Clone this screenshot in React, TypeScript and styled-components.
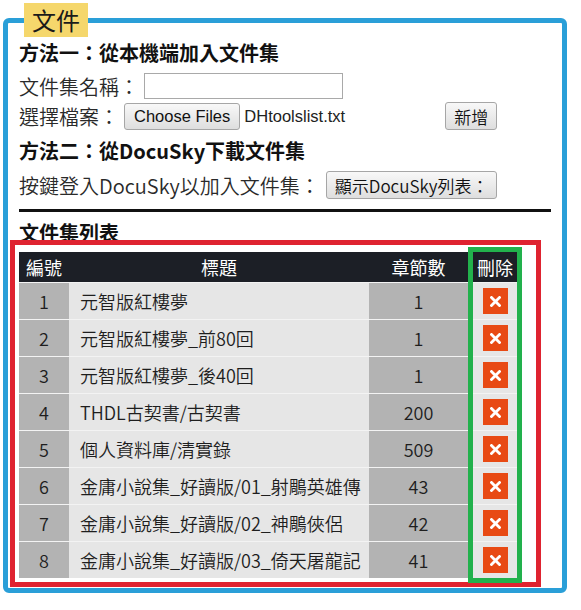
import React from 'react';
import styled, { createGlobalStyle } from 'styled-components';

const GlobalStyle = createGlobalStyle`
  html, body { margin: 0; padding: 0; background: #fff; }
  body { font-family: "Noto Sans CJK TC", "Noto Sans", sans-serif; color: #222; }
`;

const Panel = styled.fieldset`
  box-sizing: border-box;
  width: 564px;
  min-width: 0;
  margin: 3px 0 0 3px;
  padding: 0 11px 10px 11px;
  border: 5px solid #2a9fd8;
  border-radius: 6px;
`;

const Legend = styled.legend`
  margin-left: 5px;
  padding: 0 8px;
  height: 34px;
  line-height: 34px;
  background: #f5d76c;
  font-size: 24px;
  font-weight: 400;
  color: #1a1a1a;
`;

const Heading = styled.h2<{ $mt: number }>`
  margin: ${(p) => p.$mt}px 0 0;
  font-size: 20px;
  line-height: 26px;
  height: 26px;
  font-weight: 700;
  color: #111;
`;

const FieldRow = styled.div<{ $mt: number; $h: number }>`
  display: flex;
  align-items: center;
  margin-top: ${(p) => p.$mt}px;
  height: ${(p) => p.$h}px;
  font-size: 20px;
  font-weight: 350;
  color: #2a2a2a;
  white-space: nowrap;
`;

const TextInput = styled.input`
  box-sizing: border-box;
  width: 199px;
  height: 26px;
  margin: 0 0 0 5px;
  padding: 0 4px;
  border: 1px solid #a9a9a9;
  background: #fff;
`;

const NativeButton = styled.button<{ $ml: number }>`
  box-sizing: border-box;
  height: 28px;
  margin: 0 0 0 ${(p) => p.$ml}px;
  padding: 0 8px;
  border: 1px solid #a6a6a6;
  border-radius: 3px;
  background: linear-gradient(#f8f8f8, #dedede);
  color: #111;
  font-family: "Noto Sans CJK TC", sans-serif;
  font-size: 17px;
  font-weight: 350;
  line-height: 1;
  white-space: nowrap;
`;

const ChooseButton = styled(NativeButton)`
  height: 27px;
  padding: 0 9px;
  font-family: "Liberation Sans", Arial, sans-serif;
  font-size: 16.5px;
  font-weight: 400;
`;

const FileName = styled.span`
  margin-left: 4px;
  font-family: "Liberation Sans", Arial, sans-serif;
  font-size: 16.5px;
  font-weight: 400;
  color: #222;
`;

const Rule = styled.hr`
  height: 3px;
  margin: 9px 0 0;
  border: none;
  background: #111;
`;

const TableArea = styled.div`
  position: relative;
  width: 503px;
  margin-top: 6px;
`;

const GridRow = styled.div`
  display: grid;
  grid-template-columns: 50px 300px 99px 54px;
  box-sizing: border-box;
  height: 37px;
  & + & {
    border-top: 1px solid #f3f3f3;
  }
`;

const HeadRow = styled(GridRow)`
  height: 30px;
  background: #1c1f26;
  color: #fff;
  font-size: 18px;
`;

const HeadCell = styled.div`
  display: flex;
  align-items: center;
  justify-content: center;
`;

const Cell = styled.div<{ $tone: 'gray' | 'light'; $align: 'left' | 'center' }>`
  display: flex;
  align-items: center;
  justify-content: ${(p) => (p.$align === 'left' ? 'flex-start' : 'center')};
  padding-left: ${(p) => (p.$align === 'left' ? '11px' : '0')};
  background: ${(p) => (p.$tone === 'gray' ? '#b3b3b3' : '#e6e6e6')};
  font-size: 18px;
  font-weight: 350;
  color: #1e1e1e;
  white-space: nowrap;
`;

const DeleteButton = styled.button`
  display: grid;
  place-items: center;
  width: 25px;
  height: 26px;
  padding: 0;
  border: none;
  background: #e84a14;
  cursor: pointer;
`;

const RedFrame = styled.div`
  position: absolute;
  left: -9px;
  top: -12px;
  width: 531px;
  height: 347px;
  box-sizing: border-box;
  border: 5px solid #df2330;
  pointer-events: none;
`;

const GreenFrame = styled.div`
  position: absolute;
  left: 449px;
  top: -5px;
  width: 54px;
  height: 336px;
  box-sizing: border-box;
  border: 5px solid #22b14c;
  pointer-events: none;
`;

const rows: [number, string, number][] = [
  [1, '元智版紅樓夢', 1],
  [2, '元智版紅樓夢_前80回', 1],
  [3, '元智版紅樓夢_後40回', 1],
  [4, 'THDL古契書/古契書', 200],
  [5, '個人資料庫/清實錄', 509],
  [6, '金庸小說集_好讀版/01_射鵰英雄傳', 43],
  [7, '金庸小說集_好讀版/02_神鵰俠侶', 42],
  [8, '金庸小說集_好讀版/03_倚天屠龍記', 41],
];

const CrossIcon = () => (
  <svg width="11" height="11" viewBox="0 0 11 11">
    <path d="M1.5 1.5 L9.5 9.5 M9.5 1.5 L1.5 9.5" stroke="#fff" strokeWidth="2.8" strokeLinecap="square" />
  </svg>
);

export default function App() {
  return (
    <>
      <GlobalStyle />
      <Panel>
        <Legend>文件</Legend>
        <Heading $mt={3}>方法一：從本機端加入文件集</Heading>
        <FieldRow $mt={4} $h={32}>
          文件集名稱：
          <TextInput type="text" />
        </FieldRow>
        <FieldRow $mt={0} $h={28}>
          選擇檔案：
          <ChooseButton $ml={5}>Choose Files</ChooseButton>
          <FileName>DHtoolslist.txt</FileName>
          <NativeButton $ml={100}>新增</NativeButton>
        </FieldRow>
        <Heading $mt={8}>方法二：從DocuSky下載文件集</Heading>
        <FieldRow $mt={6} $h={30}>
          按鍵登入DocuSky以加入文件集：
          <NativeButton $ml={6}>顯示DocuSky列表：</NativeButton>
        </FieldRow>
        <Rule />
        <Heading $mt={8}>文件集列表</Heading>
        <TableArea>
          <HeadRow>
            <HeadCell>編號</HeadCell>
            <HeadCell>標題</HeadCell>
            <HeadCell>章節數</HeadCell>
            <HeadCell>刪除</HeadCell>
          </HeadRow>
          {rows.map(([id, title, count]) => (
            <GridRow key={id}>
              <Cell $tone="gray" $align="center">{id}</Cell>
              <Cell $tone="light" $align="left">{title}</Cell>
              <Cell $tone="gray" $align="center">{count}</Cell>
              <Cell $tone="light" $align="center">
                <DeleteButton aria-label="刪除">
                  <CrossIcon />
                </DeleteButton>
              </Cell>
            </GridRow>
          ))}
          <RedFrame />
          <GreenFrame />
        </TableArea>
      </Panel>
    </>
  );
}
